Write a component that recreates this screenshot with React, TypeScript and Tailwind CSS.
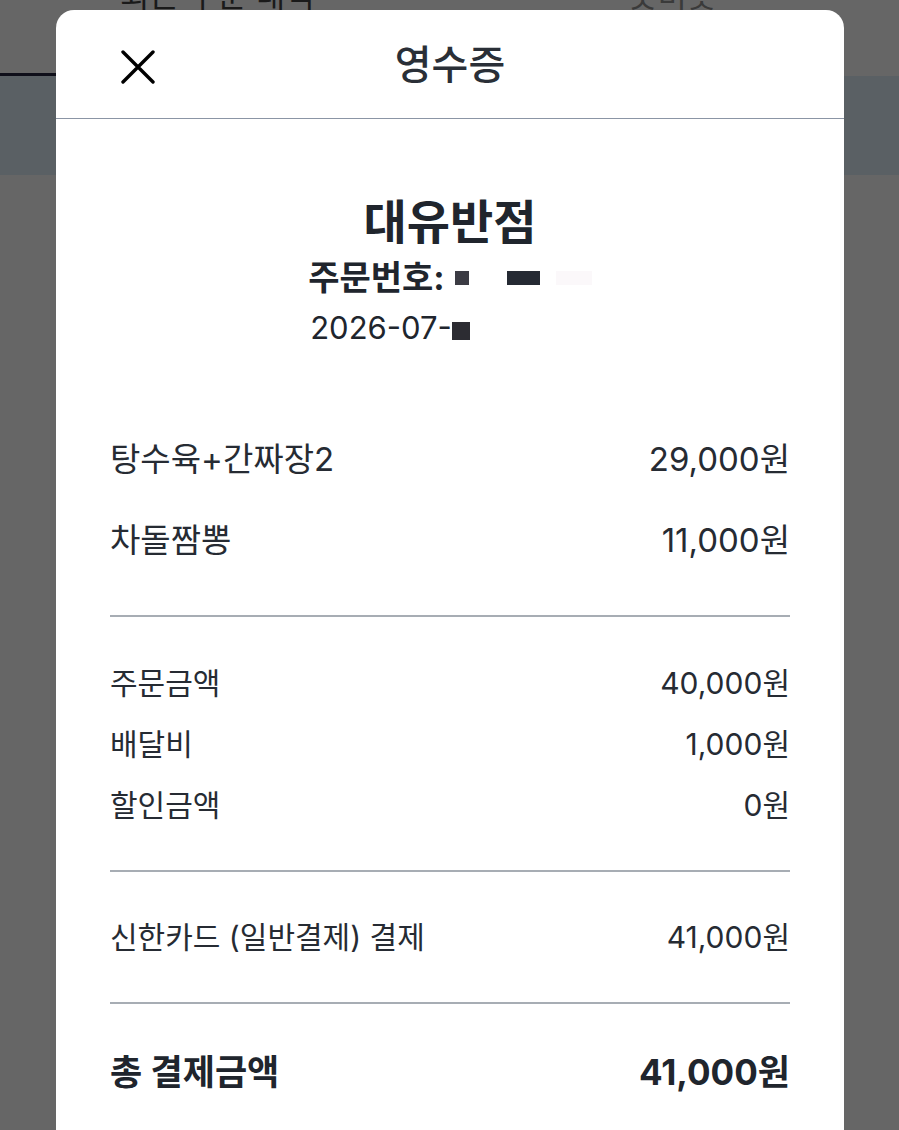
import React from "react";

const font = { fontFamily: 'Inter, "Noto Sans CJK KR", "Noto Sans", sans-serif' };

function Row({ label, value, cls }: { label: string; value: string; cls: string }) {
  return (
    <div className={`flex items-center justify-between ${cls}`}>
      <span>{label}</span>
      <span>{value}</span>
    </div>
  );
}

export default function App() {
  return (
    <div
      className="relative w-[899px] h-[1130px] overflow-hidden bg-[#666666]"
      style={font}
    >
      {/* background page */}
      <div className="h-[73px] relative">
        <div className="absolute left-[120px] top-[-24px] text-[32px] leading-[40px] text-[#1a1a1a]">최근 주문 내역</div>
        <div className="absolute left-[628px] top-[-24px] text-[32px] leading-[40px] text-[#3a3a3a]">못미룻</div>
      </div>
      <div className="h-[3px] w-[56px] bg-[#0f0f1a]" />
      <div className="h-[99px] bg-[#5a6064]" />

      {/* modal */}
      <div className="absolute left-[56px] top-[10px] w-[788px] h-[1140px] bg-white rounded-t-[18px] text-[#262b33]">
        <div className="relative h-[109px] flex items-center justify-center border-b border-[#8b95a5]">
          <svg
            className="absolute left-[65px] top-[40px]"
            width="34"
            height="34"
            viewBox="0 0 34 34"
            fill="none"
            stroke="#000"
            strokeWidth="3.4"
            strokeLinecap="round"
          >
            <path d="M2 2 L32 32 M32 2 L2 32" />
          </svg>
          <span className="text-[40px] leading-[50px] font-medium text-[#2a2f37] mt-[2px]">영수증</span>
        </div>

        <div className="px-[54px]">
          <div className="flex flex-col items-center pt-[75px]">
            <div className="h-[56px] flex items-center text-[47px] font-bold leading-[56px] text-[#20252d]">대유반점</div>
            <div className="h-[40px] mt-[8px] flex items-center text-[34px] font-bold leading-[40px] text-[#20252d]">
              <span>주문번호:</span>
              <span className="ml-[10px] w-[14px] h-[14px] bg-[#3c3c44]" />
              <span className="ml-[38px] w-[33px] h-[14px] bg-[#252a33]" />
              <span className="ml-[16px] w-[36px] h-[14px] bg-[#fbf8fa]" />
            </div>
            <div className="h-[40px] mt-[10px] flex items-center text-[31px] leading-[40px] text-[#20252d]">
              <span>2026-07-</span>
              <span className="w-[18px] h-[18px] bg-[#2c2c32] mt-[6px]" />
              <span className="w-[120px] h-[18px]" />
            </div>
          </div>

          <div className="pt-[91px] text-[33px] leading-[40px]">
            <Row label="탕수육+간짜장2" value="29,000원" cls="h-[40px]" />
            <Row label="차돌짬뽕" value="11,000원" cls="h-[40px] mt-[41px]" />
          </div>
          <div className="h-[2px] bg-[#a7adb4] mt-[55px]" />

          <div className="pt-[47px] text-[30px] leading-[38px] flex flex-col gap-[23px]">
            <Row label="주문금액" value="40,000원" cls="h-[38px]" />
            <Row label="배달비" value="1,000원" cls="h-[38px]" />
            <Row label="할인금액" value="0원" cls="h-[38px]" />
          </div>
          <div className="h-[2px] bg-[#a7adb4] mt-[46px]" />

          <div className="pt-[46px] text-[30px] leading-[38px]">
            <Row label="신한카드 (일반결제) 결제" value="41,000원" cls="h-[38px]" />
          </div>
          <div className="h-[2px] bg-[#a7adb4] mt-[46px]" />

          <div className="pt-[46px] text-[35px] font-bold leading-[44px] text-[#20252d]">
            <Row label="총 결제금액" value="41,000원" cls="h-[44px]" />
          </div>
        </div>
      </div>
    </div>
  );
}
